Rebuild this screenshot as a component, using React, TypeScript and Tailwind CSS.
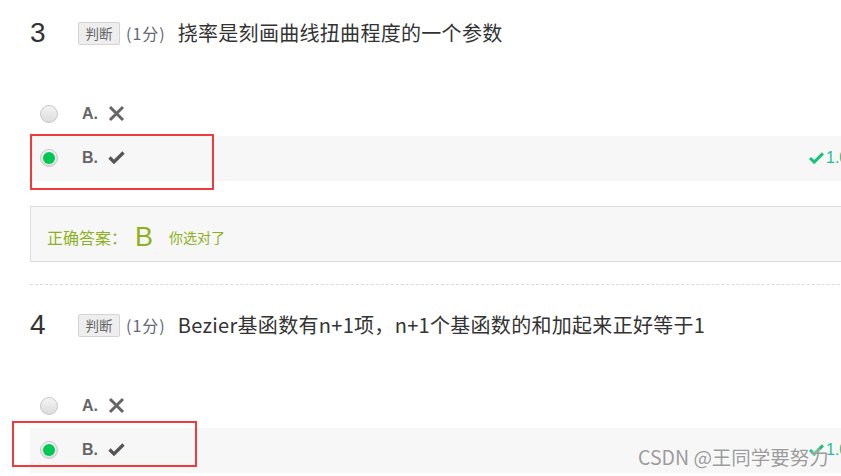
import React from "react";

const cjk = "font-['Microsoft_YaHei','Noto_Sans_CJK_SC',sans-serif]";

function Radio({ checked }: { checked?: boolean }) {
  return (
    <div className="w-[18px] h-[18px] rounded-full border border-[#c8c8c8] bg-gradient-to-b from-[#f4f4f4] to-[#dcdcdc] flex items-center justify-center shrink-0">
      {checked && <div className="w-[12px] h-[12px] rounded-full bg-[#00c853]" />}
    </div>
  );
}

function Cross() {
  return (
    <svg width="17" height="17" viewBox="0 0 17 17">
      <path d="M2 2 L15 15 M15 2 L2 15" stroke="#666" strokeWidth="3" strokeLinecap="butt" fill="none" />
    </svg>
  );
}

function Tick({ color = "#555", w = 17, h = 13 }: { color?: string; w?: number; h?: number }) {
  return (
    <svg width={w} height={h} viewBox="0 0 17 13">
      <path d="M1.5 6.5 L6 11 L15.5 1.5" stroke={color} strokeWidth="3.2" fill="none" />
    </svg>
  );
}

function Option({
  letter,
  mark,
  chosen,
}: {
  letter: string;
  mark: "x" | "v";
  chosen?: boolean;
}) {
  return (
    <div
      className={`flex items-center h-[45px] pl-[10px] ${chosen ? "bg-[#f7f7f7] pb-[2px]" : ""}`}
    >
      <div className="w-[768px] shrink-0 flex items-center">
        <Radio checked={chosen} />
        <span className="ml-[24px] w-[26px] text-[16px] font-bold text-[#666] font-['Liberation_Sans',sans-serif]">
          {letter}.
        </span>
        {mark === "x" ? <Cross /> : <Tick />}
      </div>
      {chosen && (
        <div className="flex items-center gap-[1px] text-[16px] text-[#1fc08a] font-['Liberation_Sans',sans-serif] whitespace-nowrap">
          <Tick color="#19c17a" w={17} h={12} />
          <span>1.0分</span>
        </div>
      )}
    </div>
  );
}

function Question({
  num,
  title,
  first,
}: {
  num: string;
  title: string;
  first?: boolean;
}) {
  return (
    <div className={first ? "pt-[10px]" : "pt-[17px]"}>
      <div className="flex items-center h-[46px]">
        <span className="w-[48px] text-[28px] text-[#333] font-['Liberation_Sans',sans-serif] leading-none">
          {num}
        </span>
        <span
          className={`w-[42px] h-[23px] flex items-center justify-center text-[13.5px] text-[#666] bg-[#eee] border border-[#d4d4d4] rounded-[2px] ${cjk}`}
        >
          判断
        </span>
        <span className={`ml-[6px] text-[16px] tracking-[1px] text-[#667] ${cjk}`}>(1分)</span>
        <span className={`ml-[12px] text-[20px] tracking-[0.3px] text-[#333] ${cjk}`}>{title}</span>
      </div>
      <div className="mt-[35px]">
        <Option letter="A" mark="x" />
        <Option letter="B" mark="v" chosen />
      </div>
    </div>
  );
}

export default function App() {
  return (
    <div className="relative w-[841px] h-[476px] overflow-hidden bg-white">
      <div className="w-[1000px] pl-[30px]">
        <Question num="3" title="挠率是刻画曲线扭曲程度的一个参数" first />
        <div className="mt-[25px] h-[56px] border border-[#dcdcdc] bg-[#f7f7f7] flex items-center pl-[16px] pt-[6px] text-[#8db11c]">
          <span className={`text-[16px] ${cjk}`}>正确答案：</span>
          <span className="ml-[8px] text-[27px] leading-none font-['Liberation_Sans',sans-serif]">B</span>
          <span className={`ml-[16px] text-[14px] ${cjk}`}>你选对了</span>
        </div>
        <div className="mt-[22px] border-t border-dashed border-[#dadada]" />
        <Question num="4" title="Bezier基函数有n+1项，n+1个基函数的和加起来正好等于1" />
      </div>

      <div className="absolute left-[30px] top-[134px] w-[184px] h-[56px] border-2 border-[#f23a3a]" />
      <div className="absolute left-[12px] top-[421px] w-[185px] h-[46px] border-2 border-[#f23a3a]" />

      <div
        className={`absolute left-[638px] top-[442px] text-[19.5px] text-[#9b9b9b] whitespace-nowrap ${cjk} [text-shadow:0_0_2px_#fff]`}
      >
        CSDN @王同学要努力
      </div>
    </div>
  );
}
